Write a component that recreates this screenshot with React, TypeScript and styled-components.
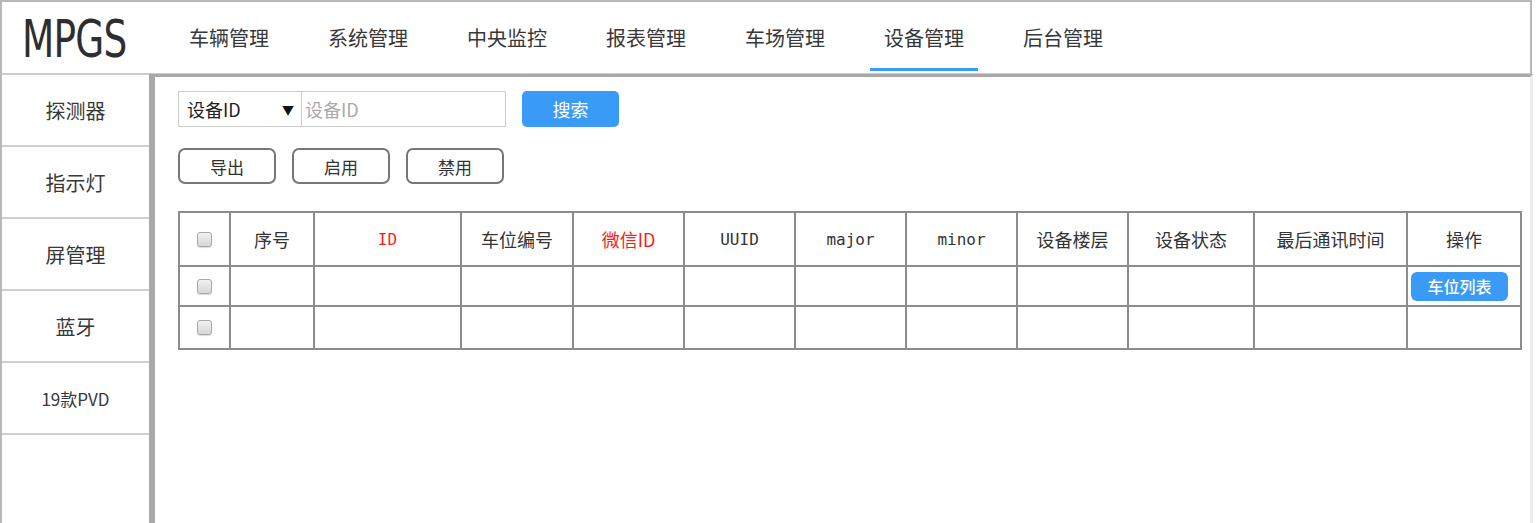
import React from 'react';
import styled, { createGlobalStyle } from 'styled-components';

const GlobalStyle = createGlobalStyle`
  html, body {
    margin: 0;
    padding: 0;
    background: #ffffff;
  }
  body {
    font-family: "Noto Sans CJK SC", "Noto Sans", sans-serif;
    color: #333333;
  }
`;

const Page = styled.div`
  width: 1533px;
  height: 523px;
  display: flex;
  flex-direction: column;
  overflow: hidden;
`;

const Header = styled.header`
  height: 71px;
  display: flex;
  align-items: stretch;
  border: 2px solid #b8b8b8;
  border-bottom-color: #cccccc;
  margin-right: 1px;
  background: #fff;
`;

const LogoBox = styled.div`
  width: 173px;
  display: flex;
  align-items: center;
  padding-left: 20px;
  box-sizing: border-box;
`;

const LogoText = styled.span`
  display: inline-block;
  font-family: "DejaVu Sans Condensed", "DejaVu Sans", sans-serif;
  font-size: 52px;
  line-height: 1;
  letter-spacing: -1px;
  color: #2e2e2e;
  transform: scaleX(0.8);
  transform-origin: left center;
  margin-top: 2px;
`;

const Nav = styled.nav`
  display: flex;
  gap: 31px;
`;

const NavItem = styled.div<{ active?: boolean }>`
  width: 108px;
  display: flex;
  align-items: center;
  justify-content: center;
  font-size: 20px;
  color: #383838;
  position: relative;
  &::after {
    content: '';
    position: absolute;
    left: 0;
    right: 0;
    bottom: 2px;
    height: 3px;
    background: ${({ active }) => (active ? '#3a9bf6' : 'transparent')};
  }
`;

const Body = styled.div`
  flex: 1;
  display: flex;
  min-height: 0;
`;

const Sidebar = styled.aside`
  width: 147px;
  border-left: 2px solid #b8b8b8;
  display: flex;
  flex-direction: column;
`;

const SideItem = styled.div<{ small?: boolean }>`
  height: 70px;
  border-bottom: 2px solid #cfcfcf;
  display: flex;
  align-items: center;
  justify-content: center;
  font-size: ${({ small }) => (small ? '17px' : '20px')};
  color: #383838;
`;

const Content = styled.main`
  flex: 1;
  border-left: 6px solid #a9a9a9;
  border-top: 3px solid #a9a9a9;
  border-right: 3px solid #ececec;
  padding: 14px 0 0 23px;
  display: flex;
  flex-direction: column;
  margin-top: -1px;
`;

const SearchRow = styled.div`
  display: flex;
  align-items: center;
  height: 36px;
`;

const SelectBox = styled.div`
  width: 124px;
  height: 36px;
  box-sizing: border-box;
  border: 1px solid #cccccc;
  display: flex;
  align-items: center;
  justify-content: space-between;
  padding: 0 7px 0 8px;
  font-size: 18px;
  color: #222;
`;

const Caret = styled.span`
  font-size: 12px;
  color: #111;
`;

const TextInput = styled.div`
  width: 204px;
  height: 36px;
  box-sizing: border-box;
  border: 1px solid #cccccc;
  border-left: none;
  display: flex;
  align-items: center;
  padding-left: 3px;
  font-size: 18px;
  color: #aaaaaa;
`;

const PrimaryButton = styled.div<{ small?: boolean }>`
  background: #3a9bf6;
  color: #ffffff;
  border-radius: ${({ small }) => (small ? '6px' : '5px')};
  display: flex;
  align-items: center;
  justify-content: center;
  width: 97px;
  height: ${({ small }) => (small ? '29px' : '36px')};
  font-size: ${({ small }) => (small ? '16px' : '18px')};
  font-weight: ${({ small }) => (small ? 500 : 400)};
  margin-left: ${({ small }) => (small ? '0' : '16px')};
`;

const ActionRow = styled.div`
  display: flex;
  gap: 16px;
  margin-top: 21px;
`;

const OutlineButton = styled.div`
  width: 98px;
  height: 36px;
  box-sizing: border-box;
  border: 2px solid #777777;
  border-radius: 7px;
  display: flex;
  align-items: center;
  justify-content: center;
  font-size: 17px;
  color: #333;
`;

const Table = styled.table`
  margin-top: 27px;
  width: 1342px;
  border-collapse: collapse;
  table-layout: fixed;
  border: 2px solid #8c8c8c;
`;

const Th = styled.th<{ red?: boolean; mono?: boolean }>`
  height: 52px;
  border: 2px solid #8c8c8c;
  font-weight: 400;
  font-size: ${({ mono }) => (mono ? '16px' : '18px')};
  font-family: ${({ mono }) =>
    mono ? '"DejaVu Sans Mono", monospace' : '"Noto Sans CJK SC", sans-serif'};
  color: ${({ red }) => (red ? '#ff1a1a' : '#333')};
  text-align: center;
  padding: 0;
`;

const Td = styled.td<{ tall?: boolean }>`
  height: ${({ tall }) => (tall ? '41px' : '38px')};
  border: 2px solid #8c8c8c;
  padding: 0;
  text-align: center;
  vertical-align: middle;
`;

const CellCenter = styled.div`
  display: flex;
  justify-content: center;
  align-items: center;
`;

const CellStart = styled.div`
  display: flex;
  justify-content: flex-start;
  align-items: center;
  padding-left: 3px;
`;

const Checkbox = styled.span`
  display: inline-block;
  width: 15px;
  height: 15px;
  box-sizing: border-box;
  border: 1px solid #a8a8a8;
  border-radius: 3px;
  background: linear-gradient(#f2f2f2, #d6d6d6);
  box-shadow: 0 1px 1px rgba(0, 0, 0, 0.15);
`;

const navItems = ['车辆管理', '系统管理', '中央监控', '报表管理', '车场管理', '设备管理', '后台管理'];
const sideItems = ['探测器', '指示灯', '屏管理', '蓝牙', '19款PVD'];

const columns: { label: string; width: number; red?: boolean; mono?: boolean }[] = [
  { label: '序号', width: 84 },
  { label: 'ID', width: 147, red: true, mono: true },
  { label: '车位编号', width: 112 },
  { label: '微信ID', width: 111, red: true },
  { label: 'UUID', width: 111, mono: true },
  { label: 'major', width: 111, mono: true },
  { label: 'minor', width: 111, mono: true },
  { label: '设备楼层', width: 111 },
  { label: '设备状态', width: 126 },
  { label: '最后通讯时间', width: 153 },
  { label: '操作', width: 114 },
];

export default function App() {
  return (
    <>
      <GlobalStyle />
      <Page>
        <Header>
          <LogoBox>
            <LogoText>MPGS</LogoText>
          </LogoBox>
          <Nav>
            {navItems.map((item) => (
              <NavItem key={item} active={item === '设备管理'}>
                {item}
              </NavItem>
            ))}
          </Nav>
        </Header>
        <Body>
          <Sidebar>
            {sideItems.map((item) => (
              <SideItem key={item} small={item === '19款PVD'}>
                {item}
              </SideItem>
            ))}
          </Sidebar>
          <Content>
            <SearchRow>
              <SelectBox>
                设备ID
                <Caret>▼</Caret>
              </SelectBox>
              <TextInput>设备ID</TextInput>
              <PrimaryButton>搜索</PrimaryButton>
            </SearchRow>
            <ActionRow>
              <OutlineButton>导出</OutlineButton>
              <OutlineButton>启用</OutlineButton>
              <OutlineButton>禁用</OutlineButton>
            </ActionRow>
            <Table>
              <colgroup>
                <col style={{ width: 51 }} />
                {columns.map((c) => (
                  <col key={c.label} style={{ width: c.width }} />
                ))}
              </colgroup>
              <thead>
                <tr>
                  <Th>
                    <CellCenter>
                      <Checkbox />
                    </CellCenter>
                  </Th>
                  {columns.map((c) => (
                    <Th key={c.label} red={c.red} mono={c.mono}>
                      {c.label}
                    </Th>
                  ))}
                </tr>
              </thead>
              <tbody>
                {[0, 1].map((row) => (
                  <tr key={row}>
                    <Td tall={row === 1}>
                      <CellCenter>
                        <Checkbox />
                      </CellCenter>
                    </Td>
                    {columns.map((c, i) => (
                      <Td key={c.label} tall={row === 1}>
                        {row === 0 && i === columns.length - 1 ? (
                          <CellStart>
                            <PrimaryButton small>车位列表</PrimaryButton>
                          </CellStart>
                        ) : null}
                      </Td>
                    ))}
                  </tr>
                ))}
              </tbody>
            </Table>
          </Content>
        </Body>
      </Page>
    </>
  );
}
